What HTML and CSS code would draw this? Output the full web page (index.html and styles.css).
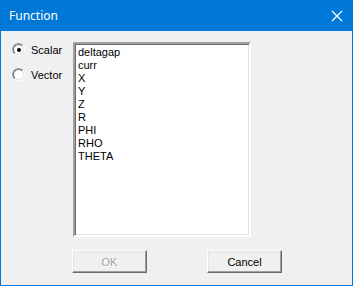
FILE: index.html
```html
<!DOCTYPE html>
<html lang="en">
<head>
  <meta charset="UTF-8">
  <title>Function</title>
  <link rel="stylesheet" href="styles.css">
</head>
<body>
  <div class="window">
    <!-- Title bar -->
    <div class="titlebar">
      <span class="title">Function</span>
      <svg class="close" width="12" height="12" viewBox="0 0 12 12">
        <path d="M1 1 L11 11 M11 1 L1 11" stroke="#fff" stroke-width="1.2" fill="none"/>
      </svg>
    </div>

    <div class="content">
      <div class="main">
        <div class="options">
          <label class="radio-row">
            <span class="radio checked"></span>
            <span>Scalar</span>
          </label>
          <label class="radio-row">
            <span class="radio"></span>
            <span>Vector</span>
          </label>
        </div>

        <ul class="listbox">
          <li>deltagap</li>
          <li>curr</li>
          <li>X</li>
          <li>Y</li>
          <li>Z</li>
          <li>R</li>
          <li>PHI</li>
          <li>RHO</li>
          <li>THETA</li>
        </ul>
      </div>

      <div class="buttons">
        <button class="btn" disabled>OK</button>
        <button class="btn">Cancel</button>
      </div>
    </div>
  </div>
</body>
</html>
```

FILE: styles.css
```css
* {
  margin: 0;
  padding: 0;
  box-sizing: border-box;
}

body {
  font-family: 'Liberation Sans', Arial, sans-serif;
  font-size: 11px;
  color: #000;
  background: #f0f0f0;
}

/* Window frame */
.window {
  width: 353px;
  height: 286px;
  border: 1px solid #0078d7;
  border-top: none;
  background: #f0f0f0;
  display: flex;
  flex-direction: column;
}

.titlebar {
  height: 31px;
  margin: 0 -1px;
  background: #0078d7;
  color: #fff;
  display: flex;
  align-items: center;
  justify-content: space-between;
  padding: 0 10px 0 9px;
}

.title {
  font-family: 'Noto Sans', 'Open Sans', sans-serif;
  font-size: 12px;
}

/* Dialog body */
.content {
  padding: 11px 0 0 71px;
}

.main {
  display: flex;
  margin-left: -71px;
}

.options {
  width: 72px;
  padding: 1px 0 0 11px;
}

.radio-row {
  display: flex;
  align-items: center;
  gap: 6px;
  height: 13px;
  margin-bottom: 12px;
}

/* Classic sunken radio */
.radio {
  width: 13px;
  height: 13px;
  border-radius: 50%;
  border: 1px solid;
  border-color: #a0a0a0 #fff #fff #a0a0a0;
  position: relative;
  flex: none;
}

.radio::before {
  content: "";
  position: absolute;
  inset: 0;
  border-radius: 50%;
  border: 1px solid;
  border-color: #696969 #e3e3e3 #e3e3e3 #696969;
  background: #fff;
}

.radio.checked::after {
  content: "";
  position: absolute;
  left: 3.5px;
  top: 3.5px;
  width: 4px;
  height: 4px;
  border-radius: 50%;
  background: #000;
}

.listbox {
  list-style: none;
  width: 178px;
  height: 195px;
  background: #fff;
  border: 2px solid;
  border-color: #a0a0a0 #fff #fff #a0a0a0;
  box-shadow: inset 1px 1px 0 #696969, inset -1px -1px 0 #e3e3e3;
  padding: 2px 2px;
}

.listbox li {
  height: 13px;
  line-height: 13px;
  padding-left: 1px;
}

/* Buttons */
.buttons {
  display: flex;
  gap: 60px;
  margin-top: 13px;
}

.btn {
  width: 75px;
  height: 23px;
  font-family: 'Liberation Sans', Arial, sans-serif;
  font-size: 11px;
  color: #000;
  background: #f0f0f0;
  border: 1px solid;
  border-color: #fff #696969 #696969 #fff;
  box-shadow: inset -1px -1px 0 #a0a0a0, inset 1px 1px 0 #e3e3e3;
}

.btn:disabled {
  color: #a0a0a0;
  text-shadow: 1px 1px 0 #fff;
}
```
